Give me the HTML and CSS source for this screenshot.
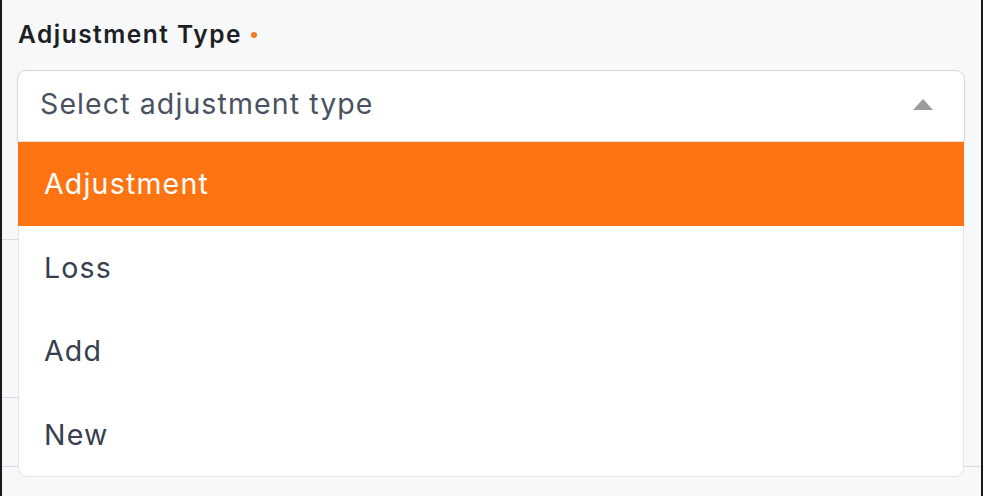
FILE: index.html
```html
<!DOCTYPE html>
<html>
<head>
<meta charset="utf-8">
<link rel="stylesheet" href="styles.css">
</head>
<body>
<div class="frame">
  <div class="field">
    <div class="label">Adjustment Type <span class="req"></span></div>
    <div class="select">
      <span class="placeholder">Select adjustment type</span>
      <svg class="caret" width="20" height="11" viewBox="0 0 20 11"><polygon points="10,0 20,11 0,11" fill="#9b9b9b"/></svg>
    </div>
  </div>
  <div class="rows">
    <div class="row r1"></div>
    <div class="row r2"></div>
    <div class="row r3"></div>
  </div>
  <ul class="menu">
    <li class="opt active">Adjustment</li>
    <li class="opt">Loss</li>
    <li class="opt">Add</li>
    <li class="opt">New</li>
  </ul>
</div>
</body>
</html>
```
FILE: styles.css
```css
html, body {
  margin: 0;
  padding: 0;
  background: #ffffff;
}
body {
  font-family: "Inter", "Noto Sans", sans-serif;
}
.frame {
  position: relative;
  width: 979px;
  height: 496px;
  margin-left: 0;
  border-left: 2px solid #1a1a1a;
  border-right: 2px solid #1a1a1a;
  background: #f7f8fa;
  overflow: hidden;
}
.field {
  padding: 16px 0 0 16px;
}
.label {
  font-size: 24.5px;
  font-weight: 600;
  color: #1d1f24;
  height: 36px;
  line-height: 36px;
  letter-spacing: 1.5px;
  display: flex;
  align-items: center;
}
.req {
  display: inline-block;
  width: 6px;
  height: 6px;
  border-radius: 50%;
  background: #f47a22;
  margin-left: 9px;
  margin-top: 2px;
}
.select {
  margin: 18px 0 0 -1px;
  height: 70px;
  border: 1px solid #d3d7dc;
  border-bottom-color: #f0dcd0;
  border-radius: 9px 9px 0 0;
  background: #ffffff;
  display: flex;
  align-items: center;
  justify-content: space-between;
  padding: 0 31px 0 22px;
  box-sizing: content-box;
  width: 893px;
}
.placeholder {
  font-size: 28.5px;
  color: #4a5261;
  margin-top: -5px;
  letter-spacing: 1.1px;
}
.caret {
  display: block;
  margin-top: -3px;
}
.rows {
  background: #f7f8fa;
}
.row {
  border-bottom: 1px solid #d8dbe0;
}
.r1 { height: 97px; width: 900px; }
.r2 { height: 157px; width: 900px; }
.r3 { height: 68px; }
.menu {
  position: absolute;
  top: 142px;
  left: 16px;
  width: 944px;
  margin: 0;
  padding: 0;
  list-style: none;
  background: #ffffff;
  border: 1px solid #e3e5e9;
  border-top: none;
  border-radius: 0 0 9px 9px;
}
.opt {
  height: 83.5px;
  display: flex;
  align-items: center;
  padding-left: 25px;
  font-size: 28.5px;
  color: #37404f;
  letter-spacing: 1.2px;
}
.opt.active {
  background: #fe7413;
  color: #ffffff;
  margin: 0 -1px;
  padding-left: 26px;
}
```
